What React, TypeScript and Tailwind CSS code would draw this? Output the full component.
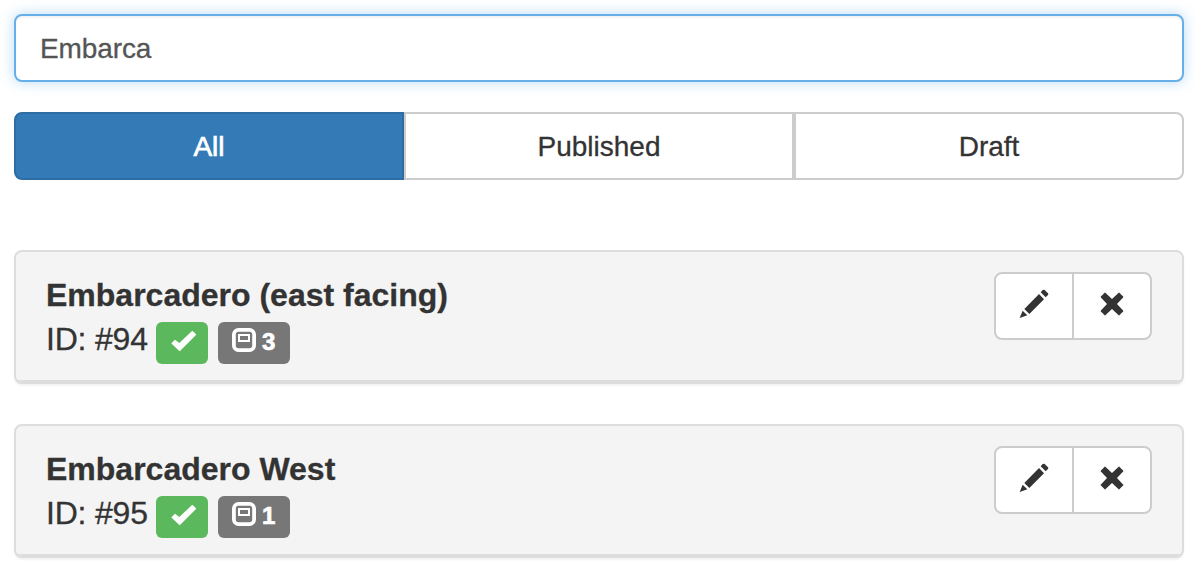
type Item = { id: number; name: string; count: number };

const items: Item[] = [
  { id: 94, name: "Embarcadero (east facing)", count: 3 },
  { id: 95, name: "Embarcadero West", count: 1 },
];

function CheckIcon() {
  return (
    <svg className="h-[22px] w-[26px]" viewBox="0 0 78 66" fill="currentColor">
      <path d="M2 36 L11 27 Q12 26 13 27 L25 36 L63 0 Q64 -1 65 0 L75 10 Q76 11 75 12 L27 60 Q26 61 25 60 L2 38 Q1 37 2 36Z" />
    </svg>
  );
}

function SlotIcon() {
  return (
    <svg className="h-6 w-6" viewBox="0 0 24 24" fill="none" stroke="currentColor">
      <rect x="1.900" y="1.900" width="20.200" height="20.200" rx="4.600" strokeWidth="3.800" />
      <rect x="7" y="7" width="10" height="6" strokeWidth="2" />
    </svg>
  );
}

function PencilIcon() {
  return (
    <svg className="h-[30px] w-[30px]" viewBox="0 0 90 90" fill="currentColor">
      <path d="M2 87 L11 65 L25 79Z M16 60 L60 15 L75 31 L31 75Z M65 10 L71 3 Q74 1 77 3 L87 13 Q89 16 87 18 L80 25Z" />
    </svg>
  );
}

function RemoveIcon() {
  return (
    <svg className="h-6 w-6" viewBox="0 0 72 72" fill="currentColor">
      <path d="M2 14 L14 2 Q15 1 16 2 L36 21 L56 2 Q57 1 58 2 L70 14 Q71 15 70 16 L51 36 L70 56 Q71 57 70 58 L58 70 Q57 71 56 70 L36 51 L16 70 Q15 71 14 70 L2 58 Q1 57 2 56 L21 36 L2 16 Q1 15 2 14Z" />
    </svg>
  );
}

function Card({ item }: { item: Item }) {
  return (
    <div className="h-[134px] overflow-hidden rounded-lg border-2 border-[#ddd] bg-[#f4f4f4] shadow-[0_2px_2px_rgba(0,0,0,0.05)]">
      <div className="flex h-full items-start justify-between border-b-2 border-[#ddd] px-[30px] pt-5">
        <div className="pt-px text-[32px] leading-[44px]">
          <h2 className="font-bold [-webkit-text-stroke:0.3px_#333]">{item.name}</h2>
          <div className="flex items-start">
            <span className="w-[110px] whitespace-nowrap tracking-[-0.2px] [-webkit-text-stroke:0.3px_#333]">ID: #{item.id}</span>
            <span className="mt-[5px] flex h-[42px] w-[52px] rounded-md bg-[#5cb85c] pl-[15px] pt-[9px] text-white">
              <CheckIcon />
            </span>
            <span className="ml-[10px] mt-[5px] flex h-[42px] w-[72px] rounded-md bg-[#777] pl-[14px] pt-[6px] text-2xl font-bold leading-[28px] text-white">
              <SlotIcon />
              <span className="ml-[6px] leading-[28px] [-webkit-text-stroke:0.7px_white]">{item.count}</span>
            </span>
          </div>
        </div>
        <div className="flex h-[68px] w-[158px] rounded-lg border-2 border-[#ccc] bg-white">
          <button aria-label="Edit" className="flex w-[78px] border-r-2 border-[#ccc] pl-[23px] pt-[15px]">
            <PencilIcon />
          </button>
          <button aria-label="Remove" className="flex flex-1 pl-[26px] pt-[18px]">
            <RemoveIcon />
          </button>
        </div>
      </div>
    </div>
  );
}

export default function App() {
  return (
    <main className="h-[570px] overflow-hidden bg-white pl-[14px] pr-3 pt-[14px] font-['Liberation_Sans',Arial,sans-serif] text-[#333]">
      <input
        type="text"
        defaultValue="Embarca"
        className="block h-[68px] w-full rounded-lg border-2 border-[#66afe9] bg-white px-6 pt-0.5 text-[28px] tracking-[-0.1px] text-[#555] shadow-[inset_0_2px_2px_rgba(0,0,0,0.05),0_0_14px_rgba(102,175,233,0.45)] outline-none [-webkit-text-stroke:0.3px_#555]"
      />
      <div className="mt-[30px] grid h-[68px] grid-cols-3 text-[28px]">
        <button className="rounded-l-lg border-2 border-[#2e6da4] bg-[#337ab7] pt-0.5 text-white [-webkit-text-stroke:0.7px_white]">All</button>
        <button className="border-2 border-[#ccc] pt-0.5 [-webkit-text-stroke:0.3px_#333]">Published</button>
        <button className="rounded-r-lg border-2 border-[#ccc] pt-0.5 [-webkit-text-stroke:0.3px_#333]">Draft</button>
      </div>
      <div className="mt-[70px] flex flex-col gap-10">
        {items.map((item) => (
          <Card key={item.id} item={item} />
        ))}
      </div>
    </main>
  );
}
